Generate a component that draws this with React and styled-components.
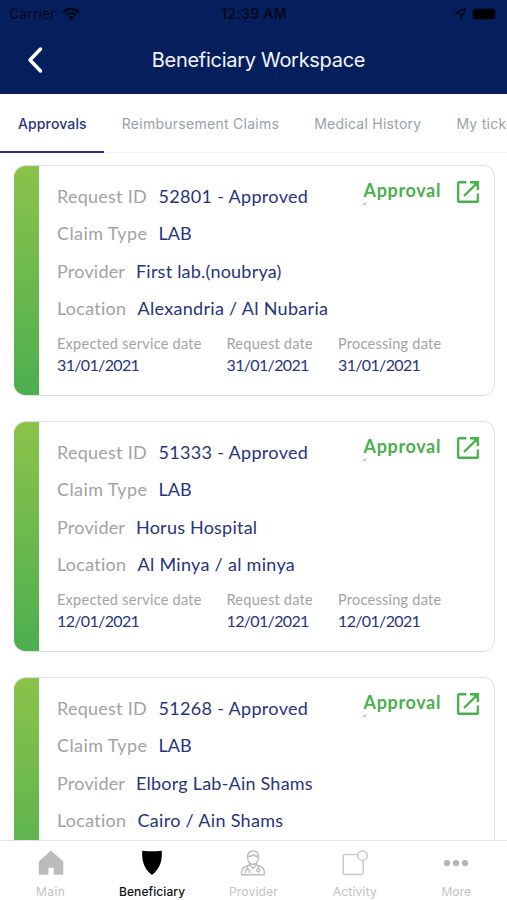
import styled, { createGlobalStyle } from "styled-components";

const colors_theme = {
  primary: "#051f5d",
  texto: "#26357d",
  label: "#a2a2a2",
  muted: "#98a1a8",
  green: "#4caf50",
  greenLight: "#8bc34a",
  border: "#e1e1e1",
  tabIcon: "#c2c2c2",
  system: "'Inter', sans-serif",
  brand: "'Lato', sans-serif",
};

const GlobalStyle = createGlobalStyle`
  * {
    box-sizing: border-box;
  }
  body {
    margin: 0;
    background: #fff;
    overflow: hidden;
  }
`;

const Screen = styled.div`
  display: flex;
  flex-direction: column;
  width: 507px;
  height: 900px;
  overflow: hidden;
  background: #fff;
  font-family: ${colors_theme.system};
`;

// header
const StatusBar = styled.div`
  display: grid;
  grid-template-columns: 1fr auto 1fr;
  align-items: center;
  flex: none;
  height: 27px;
  padding: 0 8px 0 9px;
  background: ${colors_theme.primary};
  color: #02081c;
  font-size: 14px;
`;
const Carrier = styled.div`
  display: flex;
  align-items: center;
  gap: 6px;
  letter-spacing: 0.1px;
`;
const Clock = styled.span`
  font-weight: 600;
  letter-spacing: 0.3px;
`;
const StatusIcons = styled.div`
  display: flex;
  align-items: center;
  justify-content: flex-end;
  gap: 4px;
`;
const Header = styled.header`
  display: grid;
  grid-template-columns: 60px 1fr 50px;
  align-items: center;
  flex: none;
  height: 66.5px;
  padding: 0 9px;
  background: ${colors_theme.primary};
`;
const BackButton = styled.button`
  display: flex;
  justify-content: center;
  padding: 0 8px 0 0;
  border: 0;
  background: none;
`;
const Title = styled.h1`
  margin: 0;
  text-align: center;
  color: #f3f5fb;
  font-size: 20px;
  font-weight: 400;
  line-height: 26px;
  letter-spacing: -0.29px;
  white-space: nowrap;
`;

// top tabs
const Tabs = styled.nav`
  display: flex;
  flex: none;
  height: 59.5px;
  border-bottom: 1px solid #f3f3f3;
`;
const Tab = styled.div`
  flex: none;
  padding: 19px 17px 0 18px;
  height: 59px;
  border-bottom: 2.5px solid
    ${({ $active }) => ($active ? colors_theme.texto : "transparent")};
  color: ${({ $active }) => ($active ? colors_theme.texto : colors_theme.muted)};
  font-size: 14px;
  font-weight: ${({ $active }) => ($active ? 500 : 400)};
  line-height: 22px;
  letter-spacing: ${({ $spacing }) => $spacing}px;
  white-space: nowrap;
`;

// list
const List = styled.main`
  flex: 1;
  min-height: 0;
  overflow: hidden;
  display: flex;
  flex-direction: column;
  gap: 25px;
  padding: 12px 12px 0 14px;
`;
const Card = styled.article`
  display: flex;
  flex: none;
  height: 231px;
  border: 1.5px solid ${colors_theme.border};
  border-left: 0;
  border-radius: 12px;
  overflow: hidden;
`;
const Stripe = styled.div`
  flex: none;
  width: 25px;
  background: linear-gradient(
    ${colors_theme.greenLight},
    ${colors_theme.green}
  );
`;
const CardBody = styled.div`
  position: relative;
  flex: 1;
  padding: 11.5px 0 0 18px;
  font-family: ${colors_theme.brand};
`;
const Field = styled.div`
  display: flex;
  height: 37.5px;
  line-height: 37px;
  font-size: 18px;
  white-space: nowrap;
`;
const Label = styled.span`
  flex: none;
  width: ${({ $width }) => $width}px;
  color: ${colors_theme.label};
  letter-spacing: ${({ $spacing }) => $spacing}px;
`;
const Value = styled.span`
  color: ${colors_theme.texto};
  letter-spacing: ${({ $spacing }) => $spacing}px;
`;
const Dates = styled.div`
  display: grid;
  grid-template-columns: 169.5px 111.5px 1fr;
  padding-top: 6.5px;
  white-space: nowrap;
`;
const DateLabel = styled.div`
  color: ${colors_theme.label};
  font-size: 14.5px;
  line-height: 20px;
  letter-spacing: 0.25px;
`;
const DateValue = styled.div`
  color: ${colors_theme.texto};
  font-size: 16px;
  line-height: 22px;
  letter-spacing: -0.65px;
`;
const ApprovalLink = styled.div`
  position: absolute;
  top: 12px;
  right: 14.5px;
  display: flex;
  color: ${colors_theme.green};
  font-size: 18px;
  font-weight: 700;
  line-height: 24px;
  letter-spacing: 0.65px;

  > svg:first-of-type {
    margin-top: 2px;
  }
`;
const LinkText = styled.span`
  display: block;
  width: 92px;
`;
const Tick = styled.svg`
  position: absolute;
  left: -2px;
  top: 24px;
`;

// bottom bar
const BottomBar = styled.footer`
  display: grid;
  grid-template-columns: repeat(5, 1fr);
  flex: none;
  height: 60px;
  border-top: 1px solid #e6e6e6;
  background: #fff;
`;
const BottomItem = styled.div`
  display: flex;
  flex-direction: column;
  align-items: center;
  padding-top: 9px;
  color: ${({ $active }) => ($active ? "#111" : colors_theme.tabIcon)};
  font-size: 12px;
  font-weight: ${({ $active }) => ($active ? 500 : 400)};
  line-height: 16px;
  letter-spacing: ${({ $spacing }) => $spacing}px;

  svg {
    margin-bottom: 8px;
  }
`;

const tabs = [
  { name: "Approvals", spacing: 0.13 },
  { name: "Reimbursement Claims", spacing: 0.27 },
  { name: "Medical History", spacing: 0.25 },
  { name: "My tickets", spacing: 0.25 },
];

const approvals = [
  {
    id: "52801 - Approved",
    type: "LAB",
    provider: "First lab.(noubrya)",
    location: "Alexandria / Al Nubaria",
    date: "31/01/2021",
  },
  {
    id: "51333 - Approved",
    type: "LAB",
    provider: "Horus Hospital",
    location: "Al Minya / al minya",
    date: "12/01/2021",
  },
  {
    id: "51268 - Approved",
    type: "LAB",
    provider: "Elborg Lab-Ain Shams",
    location: "Cairo / Ain Shams",
    date: "12/01/2021",
  },
];

const WifiIcon = () => (
  <svg width="18" height="14" viewBox="0 0 18 14" fill="none">
    <path d="M1.2 5.2C5.6 1 12.4 1 16.8 5.2" stroke="currentColor" strokeWidth="2.5" />
    <path d="M4 8.2c2.9-2.7 7.1-2.7 10 0" stroke="currentColor" strokeWidth="2.3" />
    <path d="M9 13.5 5.9 10.5c1.8-1.6 4.4-1.6 6.2 0z" fill="currentColor" />
  </svg>
);

const LocationIcon = () => (
  <svg width="13" height="13" viewBox="0 0 13 13" fill="none">
    <path
      d="M11.5 1.4 1.6 6.2l4.9.5.4 4.9z"
      stroke="currentColor"
      strokeWidth="1.4"
      strokeLinejoin="round"
    />
  </svg>
);

const BatteryIcon = () => (
  <svg width="28" height="14" viewBox="0 0 28 14">
    <rect x="1" y="1" width="24" height="12" rx="3.5" fill="currentColor" opacity="0.45" />
    <rect x="2.3" y="2.3" width="21.4" height="9.4" rx="2" fill="#000" />
    <path d="M26.3 5v4c1.2-.6 1.2-3.4 0-4z" fill="currentColor" opacity="0.5" />
  </svg>
);

const BackIcon = () => (
  <svg width="18" height="28" viewBox="0 0 18 28" fill="none">
    <path
      d="M14.500 3 4 14l10.500 11"
      stroke="#fff"
      strokeWidth="3.5"
      strokeLinecap="round"
      strokeLinejoin="round"
    />
  </svg>
);

const OpenIcon = () => (
  <svg width="24" height="24" viewBox="0 0 24 24" fill="none" stroke="currentColor">
    <path
      d="M10.5 2.2H3.5c-.9 0-1.4.5-1.4 1.4v16.8c0 .9.5 1.4 1.4 1.4h17c.9 0 1.4-.5 1.4-1.4v-7"
      strokeWidth="2.4"
    />
    <path d="M14 2.200h7.900V10M20.500 3.600 8 16" strokeWidth="2.400" />
    <path d="M17 2.500h4.600V7z" fill="currentColor" strokeWidth="0.500" />
  </svg>
);

const HomeIcon = () => (
  <svg width="26" height="26" viewBox="0 0 26 26">
    <path
      d="M12 1.4c.6-.5 1.4-.5 2 0l10.6 9.3c.5.4.7.9.7 1.5v11.2c0 .8-.5 1.3-1.3 1.3h-8.2v-6c0-.6-.4-1-1-1h-3.4c-.6 0-1 .4-1 1v6H2c-.8 0-1.3-.5-1.3-1.3V12.2c0-.6.2-1.1.7-1.5z"
      fill="#bcbcbc"
    />
  </svg>
);

const ShieldIcon = () => (
  <svg width="26" height="26" viewBox="0 0 26 26">
    <path
      d="M3.2.8c6.4.7 13.2.7 19.6 0 .3 8.2-.4 17-9.8 24.2C3.6 17.8 2.9 9 3.2.8z"
      fill="#000"
    />
  </svg>
);

const DoctorIcon = () => (
  <svg width="26" height="26" viewBox="0 0 26 26" fill="none" stroke="#bdbdbd" strokeWidth="1.4">
    <path d="M7.500 7C7.500 3 9.800 1 13 1s5.500 2 5.500 6-2.300 7.500-5.500 7.500S7.500 11 7.500 7z" />
    <path d="M7.800 6.500c2.600.2 4.500-.5 5.800-2 1 1.300 2.500 1.900 4.600 2" />
    <path d="M9.700 13v1.800L4.500 17c-2.200 1-3 3.300-3 7.800h23c0-4.500-.8-6.800-3-7.800l-5.200-2.200V13" />
    <path d="m9.700 15 3.300 3.500 3.300-3.500M7.500 16v3.200M5.500 23v-1.800c0-2.600 4-2.600 4 0V23M18.300 16v3" />
    <circle cx="18.300" cy="20.500" r="1.500" />
  </svg>
);

const ActivityIcon = () => (
  <svg width="26" height="26" viewBox="0 0 26 26" fill="none" stroke="#c9c9c9" strokeWidth="1.5">
    <path d="M15.8 4.5H3.2c-1.300 0-2 .7-2 2v16c0 1.300.7 2 2 2h16c1.300 0 2-.7 2-2V10.800" />
    <circle cx="20.5" cy="5.7" r="4.7" />
  </svg>
);

const MoreIcon = () => (
  <svg width="26" height="26" viewBox="0 0 26 26" fill="#b5b5b5">
    <circle cx="4" cy="13" r="3.1" />
    <circle cx="13" cy="13" r="3.1" />
    <circle cx="22" cy="13" r="3.1" />
  </svg>
);

const bottomItems = [
  { name: "Main", icon: HomeIcon, spacing: 0.4 },
  { name: "Beneficiary", icon: ShieldIcon, spacing: 0.08, active: true },
  { name: "Provider", icon: DoctorIcon, spacing: 0.2 },
  { name: "Activity", icon: ActivityIcon, spacing: 0.2 },
  { name: "More", icon: MoreIcon, spacing: 0.1 },
];

function ApprovalCard({ approval }) {
  return (
    <Card>
      <Stripe />
      <CardBody>
        <Field>
          <Label $width={101.5} $spacing={0.25}>Request ID</Label>
          <Value $spacing={0.32}>{approval.id}</Value>
        </Field>
        <Field>
          <Label $width={101.5} $spacing={0.4}>Claim Type</Label>
          <Value $spacing={0}>{approval.type}</Value>
        </Field>
        <Field>
          <Label $width={79} $spacing={0.2}>Provider</Label>
          <Value $spacing={0.22}>{approval.provider}</Value>
        </Field>
        <Field>
          <Label $width={80.5} $spacing={0.25}>Location</Label>
          <Value $spacing={0.3}>{approval.location}</Value>
        </Field>
        <Dates>
          <div>
            <DateLabel>Expected service date</DateLabel>
            <DateValue>{approval.date}</DateValue>
          </div>
          <div>
            <DateLabel>Request date</DateLabel>
            <DateValue>{approval.date}</DateValue>
          </div>
          <div>
            <DateLabel>Processing date</DateLabel>
            <DateValue>{approval.date}</DateValue>
          </div>
        </Dates>
        <ApprovalLink>
          <LinkText>Approval</LinkText>
          <OpenIcon />
          <Tick width="5" height="4" viewBox="0 0 5 4">
            <path d="M.5 3.2C1.5 1.8 2.8 1 4.5.8L3.5 2z" fill="currentColor" />
          </Tick>
        </ApprovalLink>
      </CardBody>
    </Card>
  );
}

function App() {
  return (
    <Screen>
      <GlobalStyle />
      <StatusBar>
        <Carrier>
          Carrier <WifiIcon />
        </Carrier>
        <Clock>12:39 AM</Clock>
        <StatusIcons>
          <LocationIcon />
          <BatteryIcon />
        </StatusIcons>
      </StatusBar>
      <Header>
        <BackButton aria-label="Back">
          <BackIcon />
        </BackButton>
        <Title>Beneficiary Workspace</Title>
      </Header>
      <Tabs>
        {tabs.map(({ name, spacing }, index) => (
          <Tab key={name} $active={index === 0} $spacing={spacing}>
            {name}
          </Tab>
        ))}
      </Tabs>
      <List>
        {approvals.map((approval) => (
          <ApprovalCard key={approval.id} approval={approval} />
        ))}
      </List>
      <BottomBar>
        {bottomItems.map(({ name, icon: Icon, active, spacing }) => (
          <BottomItem key={name} $active={active} $spacing={spacing}>
            <Icon />
            {name}
          </BottomItem>
        ))}
      </BottomBar>
    </Screen>
  );
}

export default App;
